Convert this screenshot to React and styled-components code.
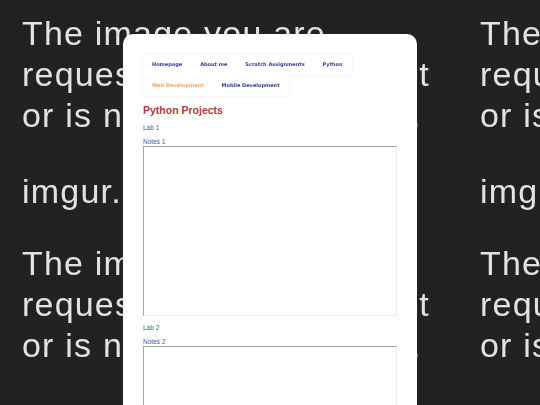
import React from 'react';
import styled, { createGlobalStyle } from 'styled-components';

const GlobalStyle = createGlobalStyle`
  html, body {
    margin: 0;
    padding: 0;
    background: #222222;
    overflow: hidden;
  }
  body {
    width: 540px;
    height: 405px;
  }
`;

// missing-image placeholder, tiled behind the page
const Backdrop = styled.div`
  position: fixed;
  inset: 0;
  display: grid;
  grid-template-columns: repeat(2, 458px);
  grid-auto-rows: 230px;
  overflow: hidden;
  z-index: 0;
`;

const Tile = styled.div`
  padding: 13px 0 0 22px;
  font-family: 'Liberation Sans', Arial, sans-serif;
  font-size: 34px;
  line-height: 41px;
  letter-spacing: 1.2px;
  color: #e2e2e2;
  white-space: nowrap;
`;

const TileLine = styled.div`
  margin-top: ${(p) => p.$gap || 0}px;
`;

const Card = styled.main`
  position: relative;
  z-index: 1;
  box-sizing: border-box;
  width: 294px;
  min-height: 420px;
  margin: 34px auto 0;
  padding: 20px 20px 0;
  background: #fff;
  border-radius: 10px 10px 0 0;
`;

const Nav = styled.ul`
  display: flex;
  flex-wrap: wrap;
  margin: 0;
  padding: 0;
  list-style: none;
  filter: drop-shadow(0 0 1px rgba(0, 0, 0, 0.09));
`;

const NavItem = styled.li`
  height: 21px;
  padding: 0 9px;
  background: #fff;
  font-family: 'DejaVu Sans', Verdana, sans-serif;
  font-size: 5px;
  font-weight: bold;
  line-height: 21px;
  color: ${(p) => (p.$active ? '#f2a866' : '#34438a')};
`;

const Title = styled.h2`
  margin: 8px 0 0;
  font-family: 'Liberation Sans', Arial, sans-serif;
  font-size: 10.5px;
  line-height: 12px;
  font-weight: bold;
  color: #b23a3a;
`;

const Label = styled.div`
  margin-top: ${(p) => p.$gap}px;
  font-family: 'Liberation Sans', Arial, sans-serif;
  font-size: 6.5px;
  line-height: 8px;
  color: #4d5a9c;
`;

const Notes = styled.textarea`
  display: block;
  box-sizing: border-box;
  width: 100%;
  height: 170px;
  margin: 0;
  padding: 2px;
  resize: none;
  background: #fff;
  border: 1px solid;
  border-color: #a2a2a2 #ececec #ececec #a2a2a2;
  outline: none;
`;

const links = [
  { name: 'Homepage' },
  { name: 'About me' },
  { name: 'Scratch Assignments' },
  { name: 'Python' },
  { name: 'Web Development', active: true },
  { name: 'Mobile Development' },
];

const labs = [1, 2];

function Placeholder() {
  return (
    <Tile>
      <TileLine>The image you are</TileLine>
      <TileLine>requesting does not exist</TileLine>
      <TileLine>or is no longer available.</TileLine>
      <TileLine $gap={35}>imgur.com</TileLine>
    </Tile>
  );
}

export default function App() {
  return (
    <>
      <GlobalStyle />
      <Backdrop>
        {[0, 1, 2, 3].map((i) => (
          <Placeholder key={i} />
        ))}
      </Backdrop>
      <Card>
        <Nav>
          {links.map((l) => (
            <NavItem key={l.name} $active={l.active}>
              {l.name}
            </NavItem>
          ))}
        </Nav>
        <Title>Python Projects</Title>
        {labs.map((n) => (
          <section key={n}>
            <Label $gap={8}>Lab {n}</Label>
            <Label $gap={6}>Notes {n}</Label>
            <Notes />
          </section>
        ))}
      </Card>
    </>
  );
}
